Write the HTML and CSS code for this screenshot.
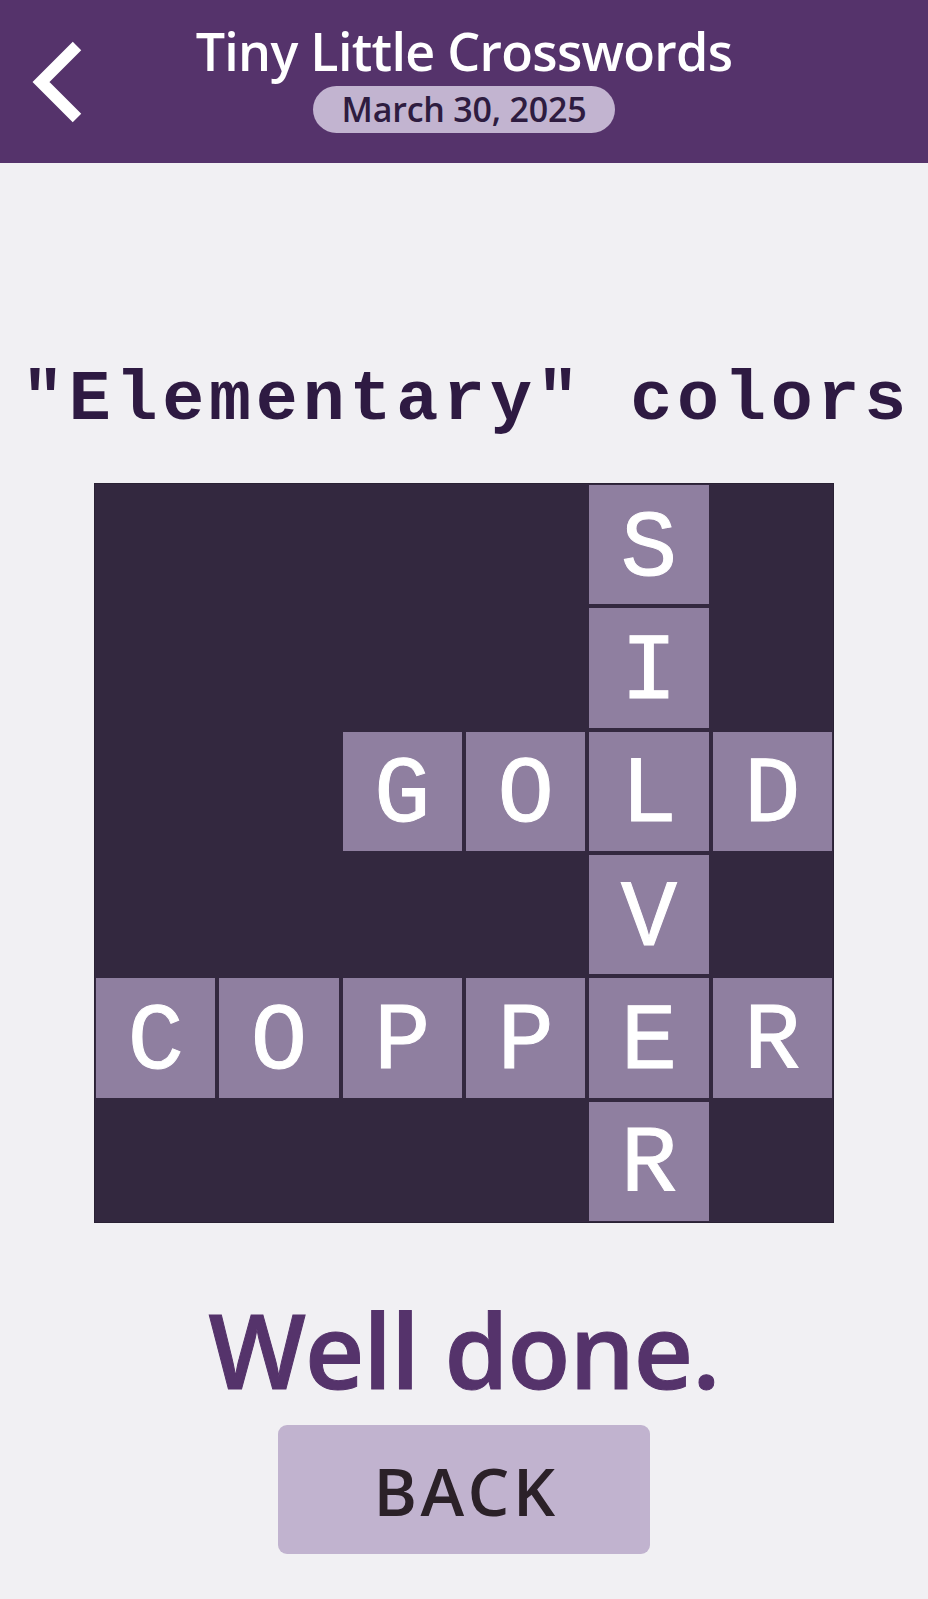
FILE: index.html
```html
<!DOCTYPE html>
<html lang="en">
<head>
  <meta charset="UTF-8" />
  <meta name="viewport" content="width=device-width, initial-scale=1.0" />
  <title>Tiny Little Crosswords</title>
  <link rel="stylesheet" href="styles.css">
</head>
<body>
  <header class="topbar">
    <a class="back-link" href="#" aria-label="Back">
      <svg width="56" height="84" viewBox="0 0 56 84">
        <polyline points="49,6 13,42 49,78" fill="none" stroke="#fff" stroke-width="12" stroke-linejoin="miter" />
      </svg>
    </a>
    <div class="topbar-title">
      <h1>Tiny Little Crosswords</h1>
      <span class="date-pill">March 30, 2025</span>
    </div>
  </header>

  <main class="puzzle">
    <h2 class="clue">"Elementary" colors</h2>

    <div class="board" id="board"></div>

    <p class="result">Well done.</p>
    <button class="back-btn" type="button">BACK</button>
  </main>

  <script>
    // 6x6 board, "." = blocked square
    var rows = [
      "....S.",
      "....I.",
      "..GOLD",
      "....V.",
      "COPPER",
      "....R."
    ];

    var board = document.getElementById("board");
    rows.forEach(function (row) {
      row.split("").forEach(function (ch) {
        var cell = document.createElement("div");
        if (ch === ".") {
          cell.className = "cell blocked";
        } else {
          cell.className = "cell";
          cell.textContent = ch;
        }
        board.appendChild(cell);
      });
    });
  </script>
</body>
</html>
```

FILE: styles.css
```css
body { margin: 0; background: #f1f0f3; font-family: "Open Sans", "Lato", sans-serif; }

.topbar { display: grid; grid-template-columns: 1fr auto 1fr; align-items: center; height: 163px; background: #55336b; }
.back-link { display: flex; padding-left: 28px; }
.topbar-title { display: flex; flex-direction: column; align-items: center; padding-top: 2px; padding-bottom: 6px; }
.topbar-title h1 { margin: 0; font-size: 52px; line-height: 50px; font-weight: 600; letter-spacing: -0.7px; color: #fff; }
.date-pill { margin-top: 10px; padding: 0 29px; height: 47px; line-height: 47px; border-radius: 24px; background: #c2b4d0; color: #2e1c40; font-size: 34px; font-weight: 600; letter-spacing: -0.2px; }

.puzzle { display: flex; flex-direction: column; align-items: center; padding-top: 201px; }
.clue { margin: 0; padding-left: 5px; font-family: "Liberation Mono", "Courier New", monospace; font-size: 70px; line-height: 74px; font-weight: 700; letter-spacing: 4.8px; color: #2e1a42; white-space: pre; }

.board { display: grid; grid-template-columns: repeat(6, 1fr); grid-template-rows: repeat(6, 1fr); gap: 4px; width: 740px; height: 740px; box-sizing: border-box; margin-top: 45px; padding: 1px; border: 1px solid #2a2134; background: #33283f; }
.cell { display: flex; align-items: center; justify-content: center; padding-top: 10px; box-sizing: border-box; background: #8f7fa0; color: #fff; font-family: "Liberation Mono", "Courier New", monospace; font-size: 94px; -webkit-text-stroke: 1px #fff; }
.cell.blocked { background: transparent; }

.result { margin: 76px 0 0; font-size: 103px; line-height: 100px; font-weight: 600; letter-spacing: -1px; color: #55336b; -webkit-text-stroke: 1px #55336b; }
.back-btn { margin-top: 26px; width: 372px; height: 129px; padding: 0 0 0 4px; border: none; border-radius: 9px; background: #c1b3cf; color: #2b2128; font-family: "Open Sans", "Lato", sans-serif; font-size: 66px; font-weight: 600; letter-spacing: 3.5px; cursor: pointer; }
```
